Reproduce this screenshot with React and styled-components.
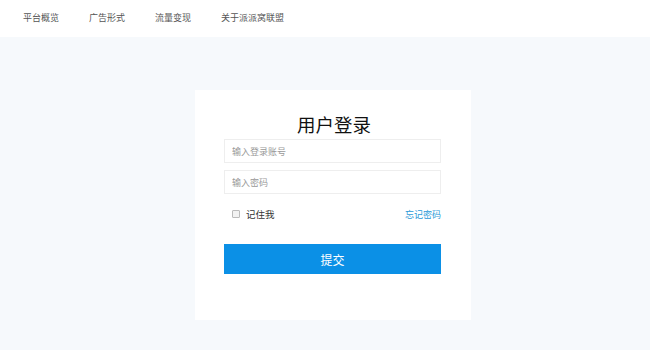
import React from "react";
import styled, { createGlobalStyle } from "styled-components";

const GlobalStyle = createGlobalStyle`
  html, body {
    margin: 0;
    padding: 0;
    background: #f6f9fc;
    font-family: "Noto Sans CJK SC", "Noto Sans", sans-serif;
  }
`;

const Page = styled.div`
  min-height: 350px;
  background: #f6f9fc;
`;

const NavBar = styled.nav`
  height: 37px;
  background: #fff;
  display: flex;
  align-items: center;
  padding-left: 23px;
  gap: 30px;
  box-sizing: border-box;
`;

const NavItem = styled.a`
  font-size: 9px;
  color: #555;
  text-decoration: none;
  line-height: 1;
  margin-top: -3px;
`;

const Card = styled.form`
  width: 276px;
  margin: 53px 0 0 195px;
  background: #fff;
  box-sizing: border-box;
  padding: 22px 30px 46px 29px;
  display: flex;
  flex-direction: column;
`;

const Title = styled.h2`
  margin: 0;
  font-size: 18.5px;
  font-weight: 400;
  line-height: 24px;
  text-align: center;
  color: #111;
  padding-left: 3px;
`;

const Input = styled.input`
  height: 24px;
  box-sizing: border-box;
  margin-top: ${(p) => p.$gap}px;
  border: 1px solid #eeeeee;
  padding: 0 7px;
  font-family: inherit;
  font-size: 9px;
  color: #333;
  outline: none;

  &::placeholder {
    color: #999;
  }
`;

const OptionsRow = styled.div`
  margin-top: 12px;
  height: 16px;
  display: flex;
  align-items: center;
  justify-content: space-between;
`;

const Remember = styled.label`
  display: flex;
  align-items: center;
  gap: 6px;
  font-size: 9.5px;
  color: #333;
  padding-left: 8px;
`;

const Box = styled.span`
  width: 6px;
  height: 6px;
  border: 1px solid #bbb;
  background: #f2f2f2;
  border-radius: 1px;
`;

const Forgot = styled.a`
  font-size: 9px;
  color: #2a9ad8;
  text-decoration: none;
`;

const Submit = styled.button`
  margin-top: 22px;
  height: 30px;
  border: none;
  background: #0b90e6;
  color: #fff;
  font-family: inherit;
  font-size: 12px;
  cursor: pointer;
`;

export default function App() {
  const nav = ["平台概览", "广告形式", "流量变现", "关于派派窝联盟"];
  return (
    <Page>
      <GlobalStyle />
      <NavBar>
        {nav.map((n) => (
          <NavItem key={n} href="#">
            {n}
          </NavItem>
        ))}
      </NavBar>
      <Card onSubmit={(e) => e.preventDefault()}>
        <Title>用户登录</Title>
        <Input $gap={3} placeholder="输入登录账号" />
        <Input $gap={7} type="password" placeholder="输入密码" />
        <OptionsRow>
          <Remember>
            <Box />
            记住我
          </Remember>
          <Forgot href="#">忘记密码</Forgot>
        </OptionsRow>
        <Submit type="submit">提交</Submit>
      </Card>
    </Page>
  );
}
